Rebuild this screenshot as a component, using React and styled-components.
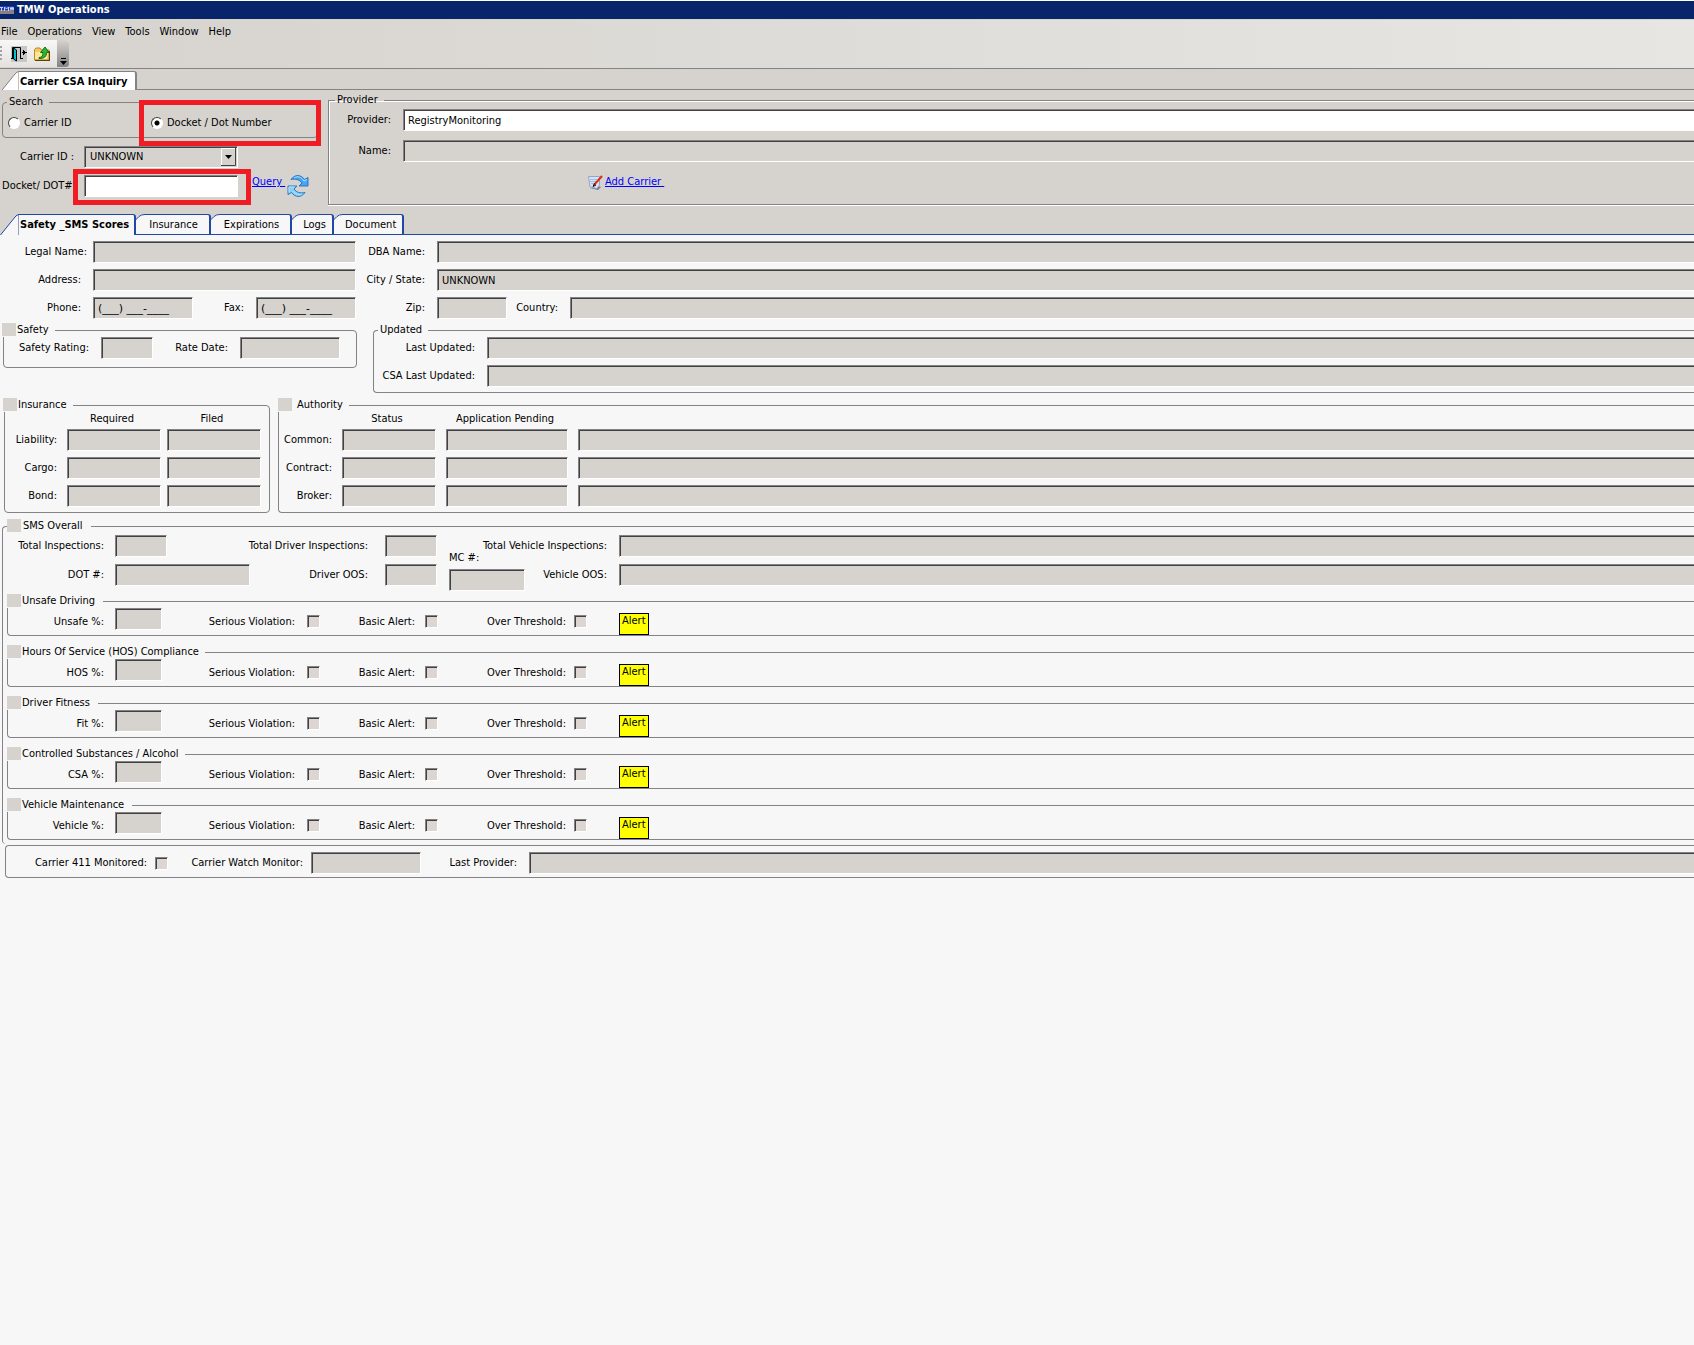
import React, { useState } from 'react';
import styled, { createGlobalStyle, css } from 'styled-components';

const GlobalStyle = createGlobalStyle`
    * {
        box-sizing: border-box;
    }

    body {
        margin: 0;
        background: #f7f7f7;
        color: #000;
        font: 11px/14px "DejaVu Sans Condensed", "Noto Sans", sans-serif;
    }

    button, input, select {
        font: inherit;
        color: inherit;
    }
`;

const face = '#d6d3ce';
const page = '#f7f7f7';
const line = '#848284';
const blue = '#2148a5';

const TitleBar = styled.header`
    display: flex;
    align-items: center;
    gap: 3px;
    height: 20px;
    border-top: 1px solid #fff;
    border-bottom: 1px solid ${face};
    background: #08246b;
    color: #fff;
    font-weight: bold;
`;

const Bars = styled.div`
    height: 49px;
    border-bottom: 1px solid ${line};
    background: linear-gradient(to right, ${face}, #e7e6e3);
`;

const MenuBar = styled.nav`
    display: flex;
    gap: 10px;
    height: 20px;
    padding: 5px 0 0 1px;
`;

const MenuItem = styled.button`
    height: 14px;
    padding: 0;
    border: 0;
    background: none;
`;

const ToolBar = styled.div`
    display: flex;
    align-items: center;
    gap: 7px;
    width: 69px;
    height: 27px;
    border-radius: 0 3px 3px 0;
    background: linear-gradient(to bottom, #f7f7f7, #e4e2de);
`;

const Grip = styled.span`
    width: 2px;
    height: 15px;
    margin-right: 2px;
    background: repeating-linear-gradient(to bottom, #a5a29f 0 2px, transparent 2px 4px);
`;

const ToolButton = styled.button`
    display: flex;
    width: 16px;
    height: 16px;
    padding: 0;
    border: 0;
    background: ${props => props.$shaded ? '#c6c7c6' : 'none'};
`;

const Overflow = styled.button`
    display: flex;
    align-items: flex-end;
    justify-content: center;
    width: 12px;
    height: 27px;
    margin-left: auto;
    padding: 0 0 2px;
    border: 0;
    border-radius: 0 3px 3px 0;
    background: linear-gradient(to bottom, #d6d3ce, #848284);
`;

const TabStrip = styled.div`
    display: flex;
    height: 21px;
    padding-top: ${props => props.$top ?? 0}px;
    background: ${face};

    &::after {
        content: '';
        flex: 1;
        border-bottom: 1px solid ${props => props.$color};
    }
`;

const TabButton = styled.button`
    display: flex;
    padding: 0;
    border: 0;
    background: none;
    white-space: nowrap;

    svg {
        flex: none;
        height: 100%;
        fill: ${props => props.$fill};
        stroke: ${props => props.$color};
    }

    span {
        height: 100%;
        padding: 3px ${props => props.$tight ? 6 : 11}px 0 ${props => props.$tight ? 3 : 5}px;
        border-top: 1px solid ${props => props.$color};
        border-right: 2px solid ${props => props.$color};
        border-top-right-radius: 3px;
        background: ${props => props.$fill};
        ${props => props.$selected ? css`
            padding-left: 1px;
            padding-right: ${props.$wide ? 8 : 5}px;
            font-weight: bold;
        ` : css`
            border-bottom: 1px solid ${props.$color};
        `}
    }
`;

const QueryPanel = styled.section`
    display: flex;
    align-items: flex-start;
    padding: 3px 0 9px 2px;
    background: ${face};
`;

const QueryForm = styled.div`
    flex: none;
    width: 326px;
    padding-top: 2px;
`;

const Group = styled.fieldset`
    flex: ${props => props.$grow ? '1' : 'none'};
    min-width: 0;
    margin: 0;
    padding: 0;
    border: 1px solid ${line};
    border-radius: 4px;
    ${props => props.$grow && css`
        border-right: 0;
        border-top-right-radius: 0;
        border-bottom-right-radius: 0;
    `}
`;

const SearchGroup = styled(Group)`
    width: 316px;
`;

const ProviderGroup = styled(Group)`
    border-radius: 0;
    box-shadow: 0 1px #fff, inset 1px 1px #fff;
`;

const Legend = styled.legend`
    display: flex;
    height: 14px;
    margin-left: ${props => props.$inset ?? 4}px;
    padding: 0 ${props => props.$end ?? 6}px 0 2px;
    white-space: nowrap;

    ${props => props.$marked && css`
        padding-left: 0;

        &::before {
            content: '';
            width: 14px;
            height: 13px;
            margin-right: ${props.$gap ?? 1}px;
            background: ${face};
        }
    `}
`;

const Choices = styled.div`
    display: grid;
    grid-template-columns: 143px 1fr;
    align-items: center;
    height: 28px;
    padding-left: 5px;
`;

const Choice = styled.label`
    display: flex;
    align-items: center;
    gap: 4px;
`;

const Radio = styled.input`
    appearance: none;
    width: 12px;
    height: 12px;
    margin: 0;
    border: 1px solid;
    border-color: #424142 #fff #fff #424142;
    border-radius: 50%;
    background: #fff;

    &:checked {
        background: radial-gradient(circle, #000 0 2px, #fff 3px);
    }
`;

const Highlight = styled.div`
    position: relative;

    &::after {
        content: '';
        position: absolute;
        inset: ${props => props.$inset};
        border: 5px solid #ef1c24;
        pointer-events: none;
    }
`;

const Row = styled.div`
    display: flex;
    align-items: center;
    height: 22px;
`;

const Rows = styled.div`
    display: grid;
    gap: 6px;
    padding-bottom: ${props => props.$bottom ?? 5}px;
`;

const QueryRows = styled.div`
    display: grid;
    gap: 7px;
    margin-top: 8px;
`;

const Label = styled.label`
    flex: none;
    width: ${props => props.$width ? `${props.$width}px` : 'auto'};
    padding-right: ${props => props.$end ?? 12}px;
    text-align: right;
    white-space: nowrap;
`;

const sunken = css`
    border: 1px solid;
    border-color: ${line} #fff #fff ${line};
    border-radius: 0;
    box-shadow: inset 1px 1px #424142;
`;

const Field = styled.input`
    flex: ${props => props.$width ? 'none' : '1'};
    width: ${props => props.$width ? `${props.$width}px` : '100%'};
    min-width: 0;
    height: 22px;
    margin: 0;
    padding: 0 4px;
    background: ${props => props.$white ? '#fff' : face};
    outline: 0;
    ${sunken}
    ${props => !props.$width && css`
        border-right: 0;
    `}
`;

const MaskedField = styled(Field)`
    font-family: "DejaVu Sans", sans-serif;
`;

const SelectBox = styled.div`
    display: grid;
    align-items: center;
    width: 154px;
    height: 22px;
    background: ${face};
    ${sunken}

    > * {
        grid-area: 1 / 1;
    }

    svg {
        justify-self: end;
        margin-right: 1px;
        pointer-events: none;
    }
`;

const Select = styled.select`
    appearance: none;
    width: 100%;
    height: 20px;
    padding: 0 5px;
    border: 0;
    background: none;
    outline: 0;
`;

const Check = styled.input`
    appearance: none;
    flex: none;
    width: 13px;
    height: 13px;
    margin: 0;
    background: #ddd5d1;
    ${sunken}
`;

const Links = styled.div`
    display: flex;
    align-items: flex-start;
    gap: 2px;
    margin-left: ${props => props.$left}px;

    a {
        color: #00f;
        text-decoration: underline;
        white-space: pre;
    }
`;

const ProviderRows = styled.div`
    display: grid;
    gap: 9px;
    padding: 2px 0 11px;
`;

const Details = styled.section`
    padding: 6px 0 5px;
`;

const Pair = styled.div`
    display: flex;
    align-items: flex-start;
    gap: ${props => props.$gap}px;
    padding-left: ${props => props.$left}px;
    margin-bottom: 5px;
`;

const SafetyRow = styled(Row)`
    margin: 0 16px 8px 0;
`;

const Matrix = styled.div`
    display: grid;
    grid-template-columns: ${props => props.$columns};
    column-gap: ${props => props.$gap}px;
    row-gap: 6px;
    align-items: center;
    padding: 0 ${props => props.$right}px 5px 0;

    > label {
        justify-self: end;
    }
`;

const Heading = styled.span`
    height: 14px;
    margin-bottom: -3px;
    padding-right: 4px;
    text-align: center;
    white-space: nowrap;
`;

const Overall = styled(Group)`
    margin: 6px 0 1px 2px;
    padding-bottom: 4px;
    border-bottom: 0;
`;

const Totals = styled.div`
    display: grid;
    grid-template: 22px 22px / 112px 135px 135px 52px 100px 82px 1fr;
    row-gap: 7px;
    align-items: center;
    padding: 2px 0 8px;

    > label {
        justify-self: end;
    }
`;

const McNumber = styled.div`
    display: flex;
    flex-direction: column;
    align-items: flex-start;
    align-self: start;
    gap: 4px;
    grid-area: 1 / 5 / 3 / 6;
    height: 51px;
    padding: 16px 0 0 12px;
`;

const Categories = styled.div`
    display: grid;
    gap: 9px;
    padding-left: 4px;
`;

const CategoryRow = styled(Row)`
    height: 27px;

    > :nth-child(2) {
        align-self: flex-start;
    }
`;

const Alert = styled.output`
    align-self: flex-end;
    height: 22px;
    margin-left: 32px;
    padding: 0 2px;
    border: 1px solid #000;
    background: #ff0;
`;

const Monitor = styled.section`
    display: flex;
    align-items: center;
    margin-left: 5px;
    padding: 6px 0 3px;
    border: 1px solid ${line};
    border-right: 0;
    border-radius: 4px 0 0 4px;
`;

const Logo = () => (
    <svg width="14" height="8" viewBox="0 0 14 8" aria-hidden="true">
        <path fill="#848284" d="M0 4h14v4H0z" />
        <path fill="#2138b5" d="M0 0h14v4H0z" />
        <path stroke="#c6d3ff" fill="none" d="M0 1.500h3M1.500 1v4M4.500 5V1l2 2 2-2v4M10 1l1 3 1-3 1 3 1-3" />
    </svg>
);

const DoorIcon = () => (
    <svg width="16" height="16" viewBox="0 0 16 16" aria-hidden="true">
        <path fill="none" stroke="#000" d="M1.500 13V1.500h8V13M0 12.500h3M9 12.500h3" />
        <path fill="#c6c7c6" d="M6 2h3v11H6z" />
        <path fill="#00c3ce" stroke="#000" d="M2.500 2l3 2v11l-3-2z" />
        <path fill="none" stroke="#000" d="M11 6.500h5M12.500 4v5M13.500 5v3" />
    </svg>
);

const FolderIcon = () => (
    <svg width="16" height="16" viewBox="0 0 16 16" aria-hidden="true">
        <path fill="#f7c763" stroke="#b58a31" d="M.5 14V3.500L2 2h4l1.500 2H15v10z" />
        <path fill="#ffe794" d="M1 6h13l-1 7H1z" />
        <path stroke="#5c4212" d="M1 14.500h15M15.500 5v9" />
        <path fill="#31b539" stroke="#087118" d="M5 11.500c3 0 4-1.500 4-5H6.500L11 1l4 5.500h-2.500c0 4-2 6-7.500 6z" />
    </svg>
);

const RefreshIcon = () => (
    <svg width="22" height="22" viewBox="0 0 22 22" aria-hidden="true">
        <path fill="#4aa5ef" stroke="#2479c6" d="M4 4.500C8-1 14-.5 17.500 4.500l3.500-2V11h-9l3-3C12.500 4.500 8.500 3.500 4 4.500z" />
        <path fill="#8bcdf5" stroke="#2479c6" d="M18 17.500C14 23 8 22.500 4.500 17.500L1 19.500V11h9l-3 3c2.500 3.500 6.500 4.500 11 3.500z" />
        <path fill="none" stroke="#b5e3ff" d="M7 3c4-2.500 7-1 10 3l3-1.500M2 17.500V12h5.500M6 16c3 4 6 4.500 9 3" />
    </svg>
);

const NoteIcon = () => (
    <svg width="15" height="15" viewBox="0 0 15 15" aria-hidden="true">
        <path fill="#737984" d="M2 13l8 2 3-3-3-1z" />
        <path fill="#d6e3f7" stroke="#94a6c6" d="M.5 1.500h11V10L9 13.500 2 12z" />
        <path stroke="#a5bde7" d="M2 4.500h7M2 6.500h6M3 8.500h4" />
        <path stroke="#d63018" strokeWidth="2" d="M14 1L6 10" />
        <path stroke="#210800" d="M6.500 8.500L5 11.500l3-1.500" fill="none" />
    </svg>
);

function Tab({ children, selected, slanted, tight, wide, fill = page, color = blue }) {
    return (
        <TabButton
            type="button"
            role="tab"
            aria-selected={!!selected}
            $selected={selected}
            $tight={tight}
            $wide={wide}
            $fill={fill}
            $color={color}
        >
            {slanted ? (
                <svg width="19" aria-hidden="true">
                    <path d="M.5 21L15 3Q17 .5 19 .5V22H0" />
                </svg>
            ) : (
                <svg width="8" aria-hidden="true">
                    <path d="M-1 6.500L3 2.500Q5 .5 9 .5V20.500H-1" />
                </svg>
            )}
            <span>{children}</span>
        </TabButton>
    );
}

const menus = ['File', 'Operations', 'View', 'Tools', 'Window', 'Help'];

const policies = ['Liability', 'Cargo', 'Bond'];
const authorities = ['Common', 'Contract', 'Broker'];

const categories = [
    { id: 'unsafe', title: 'Unsafe Driving', score: 'Unsafe %:', end: 8 },
    { id: 'hos', title: 'Hours Of Service (HOS) Compliance', score: 'HOS %:', end: 6 },
    { id: 'fit', title: 'Driver Fitness', score: 'Fit %:', end: 8 },
    { id: 'csa', title: 'Controlled Substances / Alcohol', score: 'CSA %:', end: 6 },
    { id: 'vehicle', title: 'Vehicle Maintenance', score: 'Vehicle %:', end: 8 },
];

function Category({ id, title, score, end }) {
    return (
        <Group $grow>
            <Legend $marked $inset={-1} $end={end}>{title}</Legend>
            <CategoryRow>
                <Label htmlFor={`${id}-score`} $width={107} $end={11}>{score}</Label>
                <Field id={`${id}-score`} $width={47} readOnly />
                <Label htmlFor={`${id}-serious`} $width={145}>Serious Violation:</Label>
                <Check id={`${id}-serious`} type="checkbox" />
                <Label htmlFor={`${id}-basic`} $width={105} $end={10}>Basic Alert:</Label>
                <Check id={`${id}-basic`} type="checkbox" />
                <Label htmlFor={`${id}-over`} $width={136} $end={8}>Over Threshold:</Label>
                <Check id={`${id}-over`} type="checkbox" />
                <Alert>Alert</Alert>
            </CategoryRow>
        </Group>
    );
}

export default function App() {
    const [mode, setMode] = useState('docket');
    const [docket, setDocket] = useState('');
    const [provider, setProvider] = useState('RegistryMonitoring');

    return (
        <>
            <GlobalStyle />
            <TitleBar><Logo />TMW Operations</TitleBar>
            <Bars>
                <MenuBar>
                    {menus.map(item => <MenuItem key={item} type="button">{item}</MenuItem>)}
                </MenuBar>
                <ToolBar>
                    <Grip />
                    <ToolButton type="button" aria-label="Exit" $shaded><DoorIcon /></ToolButton>
                    <ToolButton type="button" aria-label="Open"><FolderIcon /></ToolButton>
                    <Overflow type="button" aria-label="Toolbar options">
                        <svg width="7" height="7" aria-hidden="true">
                            <path d="M1 0h5v1H1zM0 3h7L3.500 7z" />
                        </svg>
                    </Overflow>
                </ToolBar>
            </Bars>

            <TabStrip role="tablist" $color={line} $top={2}>
                <Tab selected slanted wide fill="#fff" color={line}>Carrier CSA Inquiry</Tab>
            </TabStrip>

            <QueryPanel>
                <QueryForm>
                    <SearchGroup>
                        <Legend>Search</Legend>
                        <Choices>
                            <Choice>
                                <Radio type="radio" name="mode" checked={mode === 'carrier'} onChange={() => setMode('carrier')} />
                                Carrier ID
                            </Choice>
                            <Highlight $inset="-16px -4px -16px -12px">
                                <Choice>
                                    <Radio type="radio" name="mode" checked={mode === 'docket'} onChange={() => setMode('docket')} />
                                    Docket / Dot Number
                                </Choice>
                            </Highlight>
                        </Choices>
                    </SearchGroup>
                    <QueryRows>
                        <Row>
                            <Label htmlFor="carrier" $width={82} $end={10}>Carrier ID :</Label>
                            <SelectBox>
                                <Select id="carrier">
                                    <option>UNKNOWN</option>
                                </Select>
                                <svg width="15" height="18" aria-hidden="true">
                                    <path fill="#d6d3ce" d="M0 0h15v18H0z" />
                                    <path fill="none" stroke="#fff" d="M.5 17V.5H14" />
                                    <path fill="none" stroke="#424142" d="M14.500 0v17.500H0" />
                                    <path d="M4 7h7L7.500 11z" />
                                </svg>
                            </SelectBox>
                        </Row>
                        <Row>
                            <Label htmlFor="docket" $width={82} $end={8}>Docket/ DOT#:</Label>
                            <Highlight $inset="-6px -13px -8px -11px">
                                <Field id="docket" $width={154} $white value={docket} onChange={e => setDocket(e.target.value)} />
                            </Highlight>
                            <Links $left={14}>
                                <a href="#query">{'Query '}</a>
                                <RefreshIcon />
                            </Links>
                        </Row>
                    </QueryRows>
                </QueryForm>
                <ProviderGroup $grow>
                    <Legend $inset={6}>Provider</Legend>
                    <ProviderRows>
                        <Row>
                            <Label htmlFor="provider" $width={74}>Provider:</Label>
                            <Field id="provider" $white value={provider} onChange={e => setProvider(e.target.value)} />
                        </Row>
                        <Row>
                            <Label htmlFor="name" $width={74}>Name:</Label>
                            <Field id="name" readOnly />
                        </Row>
                        <Row>
                            <Links $left={259}>
                                <NoteIcon />
                                <a href="#add-carrier">{'Add Carrier '}</a>
                            </Links>
                        </Row>
                    </ProviderRows>
                </ProviderGroup>
            </QueryPanel>

            <TabStrip role="tablist" $color={blue}>
                <Tab selected slanted>Safety _SMS Scores</Tab>
                <Tab>Insurance</Tab>
                <Tab>Expirations</Tab>
                <Tab tight>Logs</Tab>
                <Tab tight>Document</Tab>
            </TabStrip>

            <Details>
                <Rows $bottom={4}>
                    <Row>
                        <Label htmlFor="legal" $width={93} $end={6}>Legal Name:</Label>
                        <Field id="legal" $width={263} readOnly />
                        <Label htmlFor="dba" $width={81}>DBA Name:</Label>
                        <Field id="dba" readOnly />
                    </Row>
                    <Row>
                        <Label htmlFor="address" $width={93}>Address:</Label>
                        <Field id="address" $width={263} readOnly />
                        <Label htmlFor="city" $width={81}>City / State:</Label>
                        <Field id="city" value="UNKNOWN" readOnly />
                    </Row>
                    <Row>
                        <Label htmlFor="phone" $width={93}>Phone:</Label>
                        <MaskedField id="phone" $width={100} value="(___) ___-____" readOnly />
                        <Label htmlFor="fax" $width={63}>Fax:</Label>
                        <MaskedField id="fax" $width={100} value="(___) ___-____" readOnly />
                        <Label htmlFor="zip" $width={81}>Zip:</Label>
                        <Field id="zip" $width={70} readOnly />
                        <Label htmlFor="country" $width={63}>Country:</Label>
                        <Field id="country" readOnly />
                    </Row>
                </Rows>

                <Pair $left={3} $gap={16}>
                    <Group>
                        <Legend $marked $inset={-2}>Safety</Legend>
                        <SafetyRow>
                            <Label htmlFor="rating" $width={97}>Safety Rating:</Label>
                            <Field id="rating" $width={52} readOnly />
                            <Label htmlFor="rate-date" $width={87}>Rate Date:</Label>
                            <Field id="rate-date" $width={100} readOnly />
                        </SafetyRow>
                    </Group>
                    <Group $grow>
                        <Legend>Updated</Legend>
                        <Rows>
                            <Row>
                                <Label htmlFor="updated" $width={113}>Last Updated:</Label>
                                <Field id="updated" readOnly />
                            </Row>
                            <Row>
                                <Label htmlFor="csa-updated" $width={113}>CSA Last Updated:</Label>
                                <Field id="csa-updated" readOnly />
                            </Row>
                        </Rows>
                    </Group>
                </Pair>

                <Pair $left={4} $gap={8}>
                    <Group>
                        <Legend $marked $inset={-2}>Insurance</Legend>
                        <Matrix $columns="56px 94px 94px" $gap={6} $right={8}>
                            <Heading />
                            <Heading>Required</Heading>
                            <Heading>Filed</Heading>
                            {policies.map(name => (
                                <React.Fragment key={name}>
                                    <Label htmlFor={name} $end={4}>{name}:</Label>
                                    <Field id={name} $width={94} readOnly />
                                    <Field aria-label={`${name} filed`} $width={94} readOnly />
                                </React.Fragment>
                            ))}
                        </Matrix>
                    </Group>
                    <Group $grow>
                        <Legend $marked $inset={-1} $gap={5}>Authority</Legend>
                        <Matrix $columns="53px 94px 122px 1fr" $gap={10} $right={0}>
                            <Heading />
                            <Heading>Status</Heading>
                            <Heading>Application Pending</Heading>
                            <Heading />
                            {authorities.map(name => (
                                <React.Fragment key={name}>
                                    <Label htmlFor={name} $end={0}>{name}:</Label>
                                    <Field id={name} $width={94} readOnly />
                                    <Field aria-label={`${name} application pending`} $width={122} readOnly />
                                    <Field aria-label={`${name} notes`} readOnly />
                                </React.Fragment>
                            ))}
                        </Matrix>
                    </Group>
                </Pair>

                <Overall $grow>
                    <Legend $marked $end={8} $gap={2}>SMS Overall</Legend>
                    <Totals>
                        <Label htmlFor="total" $end={11}>Total Inspections:</Label>
                        <Field id="total" $width={52} readOnly />
                        <Label htmlFor="total-driver" $end={17}>Total Driver Inspections:</Label>
                        <Field id="total-driver" $width={52} readOnly />
                        <McNumber>
                            <Label htmlFor="mc" $end={0}>MC #:</Label>
                            <Field id="mc" $width={76} readOnly />
                        </McNumber>
                        <Label htmlFor="total-vehicle">Total Vehicle Inspections:</Label>
                        <Field id="total-vehicle" readOnly />
                        <Label htmlFor="dot" $end={11}>DOT #:</Label>
                        <Field id="dot" $width={135} readOnly />
                        <Label htmlFor="driver-oos" $end={17}>Driver OOS:</Label>
                        <Field id="driver-oos" $width={52} readOnly />
                        <Label htmlFor="vehicle-oos">Vehicle OOS:</Label>
                        <Field id="vehicle-oos" readOnly />
                    </Totals>
                    <Categories>
                        {categories.map(item => <Category key={item.id} {...item} />)}
                    </Categories>
                </Overall>

                <Monitor>
                    <Label htmlFor="monitored" $width={149} $end={8}>Carrier 411 Monitored:</Label>
                    <Check id="monitored" type="checkbox" />
                    <Label htmlFor="watch" $width={143} $end={8}>Carrier Watch Monitor:</Label>
                    <Field id="watch" $width={110} readOnly />
                    <Label htmlFor="last-provider" $width={108}>Last Provider:</Label>
                    <Field id="last-provider" readOnly />
                </Monitor>
            </Details>
        </>
    );
}
